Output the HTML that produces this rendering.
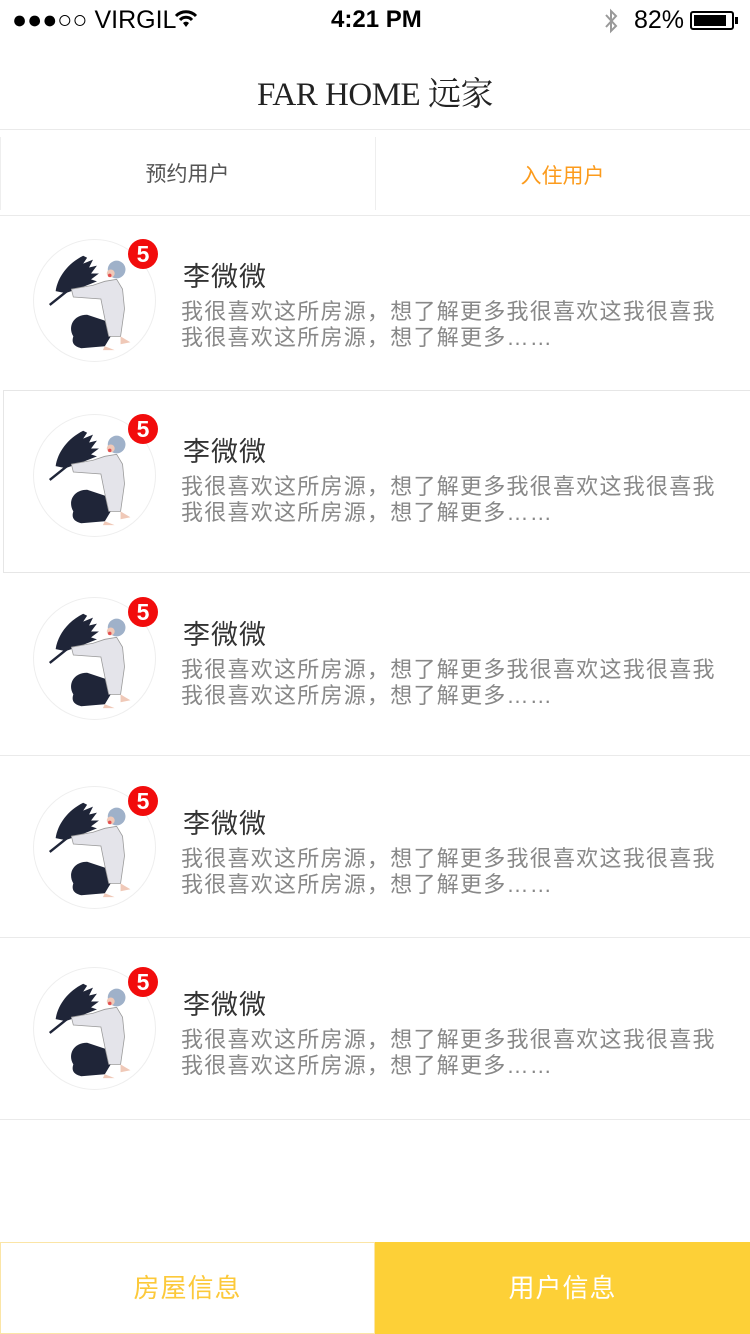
<!DOCTYPE html>
<html><head><meta charset="utf-8"><style>
*{margin:0;padding:0;box-sizing:border-box}
body{width:750px;height:1334px;position:relative;background:#fff;font-family:"Liberation Sans","Noto Sans CJK SC",sans-serif;overflow:hidden}
.abs{position:absolute}
.sb{font-size:25px;color:#000;top:6px}
.title{top:68px;left:0;width:750px;text-align:center;font-family:"Liberation Serif","Noto Serif CJK SC",serif;font-size:33px;color:#222;letter-spacing:-0.5px}
.row{position:absolute;left:0;width:750px}
.av{position:absolute;left:33px;width:123px;height:123px;border-radius:50%;border:1px solid #eee;background:#fff}
.badge{position:absolute;left:128px;width:30px;height:30px;border-radius:50%;background:#f20c0c;color:#fff;font-size:23px;line-height:30px;text-align:center;font-weight:bold}
.name{position:absolute;left:183px;font-size:27px;color:#333;letter-spacing:1px}
.desc{position:absolute;left:181px;font-size:22px;color:#888;line-height:26px;white-space:nowrap;letter-spacing:1.25px}
.line{position:absolute;left:0;width:750px;height:1px;background:#eaeaea}
</style></head><body>
<svg width="0" height="0" style="position:absolute"><defs>
<symbol id="fig" viewBox="0 0 123 123">
<g fill="#1f2538">
<path d="M22 52 C24 38 34 24 50 16 L54 18 L50 24 L60 20 L56 28 L64 26 L58 34 L66 34 L58 40 L64 42 L54 46 L44 50 L32 54 Z"/>
<path d="M16 66 L36 50" stroke="#1f2538" stroke-width="2.5"/>
<path d="M40 98 C34 88 40 76 54 76 L72 82 L78 98 L72 108 L48 110 C40 108 38 104 40 98 Z"/>
</g>
<path d="M38 50 L60 46 L72 42 L84 40 L90 50 L92 70 L88 98 L76 98 L72 80 L68 60 L40 58 Z" fill="#e4e4ea" stroke="#9a9a9a" stroke-width="0.8"/>
<circle cx="84" cy="30" r="9" fill="#9fb1c9"/>
<circle cx="78" cy="34" r="4" fill="#f0c9b8"/>
<circle cx="77" cy="36" r="1.8" fill="#e45050"/>
<path d="M88 98 L98 104 L88 106 Z M72 108 L82 112 L70 112 Z" fill="#f0c9b8"/>
</symbol></defs></svg>

<div class="abs sb" style="left:12px">●●●○○ VIRGIL</div>
<svg class="abs" style="left:174px;top:10px" width="24" height="18" viewBox="0 0 24 18"><path d="M2 6 A14 14 0 0 1 22 6 M6 10 A8 8 0 0 1 18 10" stroke="#000" stroke-width="3" fill="none"/><path d="M9 13 L12 17 L15 13 A4 4 0 0 0 9 13 Z" fill="#000"/></svg>
<div class="abs sb" style="left:331px;font-weight:bold;font-size:24px">4:21 PM</div>
<svg class="abs" style="left:603px;top:8px" width="16" height="26" viewBox="0 0 16 26"><path d="M3 7 L13 18 L8 23 L8 3 L13 8 L3 19" stroke="#999" stroke-width="2" fill="none"/></svg>
<div class="abs sb" style="left:634px">82%</div>
<div class="abs" style="left:690px;top:11px;width:44px;height:19px;border:2px solid #000;border-radius:3px;padding:2px"><div style="width:32px;height:11px;background:#000"></div></div>
<div class="abs" style="left:735px;top:17px;width:3px;height:7px;background:#000"></div>

<div class="abs title">FAR HOME 远家</div>
<div class="line" style="top:129px"></div>
<div class="abs" style="left:0;top:137px;width:1px;height:73px;background:#eee"></div>
<div class="abs" style="left:375px;top:137px;width:1px;height:73px;background:#eee"></div>
<div class="abs" style="left:0;top:158px;width:375px;text-align:center;font-size:21px;color:#555">预约用户</div>
<div class="abs" style="left:375px;top:160px;width:375px;text-align:center;font-size:21px;color:#fc9b1c">入住用户</div>
<div class="line" style="top:215px"></div>

<div class="row" style="top:215px;height:175px">
<div class="av" style="top:24px"><svg width="121" height="121"><use href="#fig"/></svg></div>
<div class="badge" style="top:24px">5</div>
<div class="name" style="top:40px">李微微</div>
<div class="desc" style="top:84px">我很喜欢这所房源，想了解更多我很喜欢这我很喜我<br>我很喜欢这所房源，想了解更多……</div>
</div>
<div class="abs" style="left:3px;top:390px;width:750px;height:183px;border:1px solid #e6e6e6"></div>
<div class="row" style="top:390px;height:182px">
<div class="av" style="top:24px"><svg width="121" height="121"><use href="#fig"/></svg></div>
<div class="badge" style="top:24px">5</div>
<div class="name" style="top:40px">李微微</div>
<div class="desc" style="top:84px">我很喜欢这所房源，想了解更多我很喜欢这我很喜我<br>我很喜欢这所房源，想了解更多……</div>
</div>
<div class="row" style="top:573px;height:182px">
<div class="av" style="top:24px"><svg width="121" height="121"><use href="#fig"/></svg></div>
<div class="badge" style="top:24px">5</div>
<div class="name" style="top:40px">李微微</div>
<div class="desc" style="top:84px">我很喜欢这所房源，想了解更多我很喜欢这我很喜我<br>我很喜欢这所房源，想了解更多……</div>
</div>
<div class="line" style="top:755px"></div>
<div class="row" style="top:755px;height:182px">
<div class="av" style="top:31px"><svg width="121" height="121"><use href="#fig"/></svg></div>
<div class="badge" style="top:31px">5</div>
<div class="name" style="top:47px">李微微</div>
<div class="desc" style="top:91px">我很喜欢这所房源，想了解更多我很喜欢这我很喜我<br>我很喜欢这所房源，想了解更多……</div>
</div>
<div class="line" style="top:937px"></div>
<div class="row" style="top:937px;height:182px">
<div class="av" style="top:30px"><svg width="121" height="121"><use href="#fig"/></svg></div>
<div class="badge" style="top:30px">5</div>
<div class="name" style="top:46px">李微微</div>
<div class="desc" style="top:90px">我很喜欢这所房源，想了解更多我很喜欢这我很喜我<br>我很喜欢这所房源，想了解更多……</div>
</div>
<div class="line" style="top:1119px"></div>

<div class="abs" style="left:0;top:1242px;width:375px;height:92px;border:1px solid #fbe5a6;text-align:center;line-height:90px;font-size:26px;color:#fcc93a;letter-spacing:1px">房屋信息</div>
<div class="abs" style="left:375px;top:1242px;width:375px;height:92px;background:#fdd037;text-align:center;line-height:92px;font-size:26px;color:#fff;letter-spacing:1px">用户信息</div>
</body></html>
